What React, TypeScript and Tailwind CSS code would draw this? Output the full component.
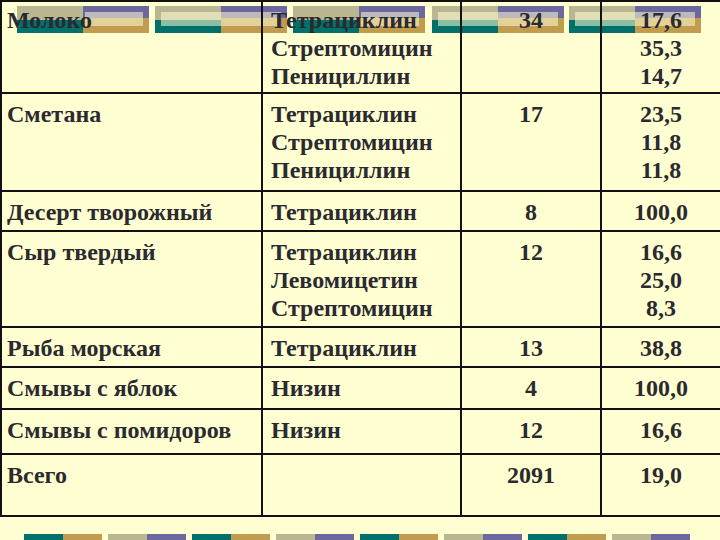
import React from 'react';

type Row = {
  name: string;
  drugs: string[];
  count: string;
  pct: string[];
  h: string;
};

const rows: Row[] = [
  { name: 'Молоко', drugs: ['Тетрациклин', 'Стрептомицин', 'Пенициллин'], count: '34', pct: ['17,6', '35,3', '14,7'], h: 'h-[92px]' },
  { name: 'Сметана', drugs: ['Тетрациклин', 'Стрептомицин', 'Пенициллин'], count: '17', pct: ['23,5', '11,8', '11,8'], h: 'h-[98px]' },
  { name: 'Десерт творожный', drugs: ['Тетрациклин'], count: '8', pct: ['100,0'], h: 'h-[40px]' },
  { name: 'Сыр твердый', drugs: ['Тетрациклин', 'Левомицетин', 'Стрептомицин'], count: '12', pct: ['16,6', '25,0', '8,3'], h: 'h-[96px]' },
  { name: 'Рыба морская', drugs: ['Тетрациклин'], count: '13', pct: ['38,8'], h: 'h-[40px]' },
  { name: 'Смывы с яблок', drugs: ['Низин'], count: '4', pct: ['100,0'], h: 'h-[42px]' },
  { name: 'Смывы с помидоров', drugs: ['Низин'], count: '12', pct: ['16,6'], h: 'h-[45px]' },
  { name: 'Всего', drugs: [], count: '2091', pct: ['19,0'], h: 'h-[62px]' },
];

const OLIVE = '#b8b792';
const TEAL = '#00706b';
const PURPLE = '#6b679f';
const GOLD = '#c29c4e';

// slide background ornament, top row
function TopStripes() {
  const groups = [
    { x: 17, full: false },
    { x: 155, full: true },
    { x: 293, full: false },
    { x: 432, full: true },
    { x: 569, full: true },
  ];
  return (
    <svg className="absolute left-0 top-0" width="720" height="40" viewBox="0 0 720 40">
      {groups.map((g) => (
        <g key={g.x}>
          <rect x={g.x} y={6} width={66} height={14} fill={OLIVE} />
          <rect x={g.x} y={20} width={66} height={13} fill={TEAL} />
          <rect x={g.x + 66} y={6} width={66} height={12} fill={PURPLE} />
          <rect x={g.x + 66} y={18} width={66} height={15} fill={GOLD} />
          <rect
            x={g.full ? g.x + 6 : g.x + 68}
            y={12}
            width={g.full ? 120 : 58}
            height={14}
            fill="#ffffd4"
            opacity={0.55}
          />
        </g>
      ))}
    </svg>
  );
}

function BottomStripes() {
  const xs = [24, 108, 192, 276, 360, 444, 528, 612];
  return (
    <svg className="absolute left-0 top-[534px]" width="720" height="6" viewBox="0 0 720 6">
      {xs.map((x, i) => (
        <g key={x}>
          <rect x={x} y={0} width={39} height={6} fill={i % 2 === 0 ? TEAL : OLIVE} />
          <rect x={x + 39} y={0} width={39} height={6} fill={i % 2 === 0 ? GOLD : PURPLE} />
        </g>
      ))}
    </svg>
  );
}

export default function App() {
  return (
    <div
      className="relative w-[720px] h-[540px] overflow-hidden bg-[#ffffd2] text-[#2a2a30]"
      style={{ fontFamily: '"Liberation Serif", "Times New Roman", serif' }}
    >
      <TopStripes />
      <BottomStripes />

      <div className="relative grid w-[722px] grid-cols-[261px_199px_140px_120px] border-l-2 border-t-2 border-[#111] text-[24px] font-bold leading-[28px]">
        {rows.map((r, i) => (
          <React.Fragment key={r.name}>
            <div className={`${r.h} border-r-2 border-b-2 border-[#111] pl-[5px] ${i === 0 ? 'pt-[4px]' : 'pt-[6px]'}`}>
              {r.name}
            </div>
            <div className={`${r.h} border-r-2 border-b-2 border-[#111] pl-[8px] ${i === 0 ? 'pt-[4px]' : 'pt-[6px]'}`}>
              {r.drugs.map((d) => (
                <div key={d}>{d}</div>
              ))}
            </div>
            <div className={`${r.h} border-r-2 border-b-2 border-[#111] text-center ${i === 0 ? 'pt-[4px]' : 'pt-[6px]'}`}>
              {r.count}
            </div>
            <div className={`${r.h} border-r-2 border-b-2 border-[#111] text-center ${i === 0 ? 'pt-[4px]' : 'pt-[6px]'}`}>
              {r.pct.map((p, j) => (
                <div key={j}>{p}</div>
              ))}
            </div>
          </React.Fragment>
        ))}
      </div>
    </div>
  );
}
